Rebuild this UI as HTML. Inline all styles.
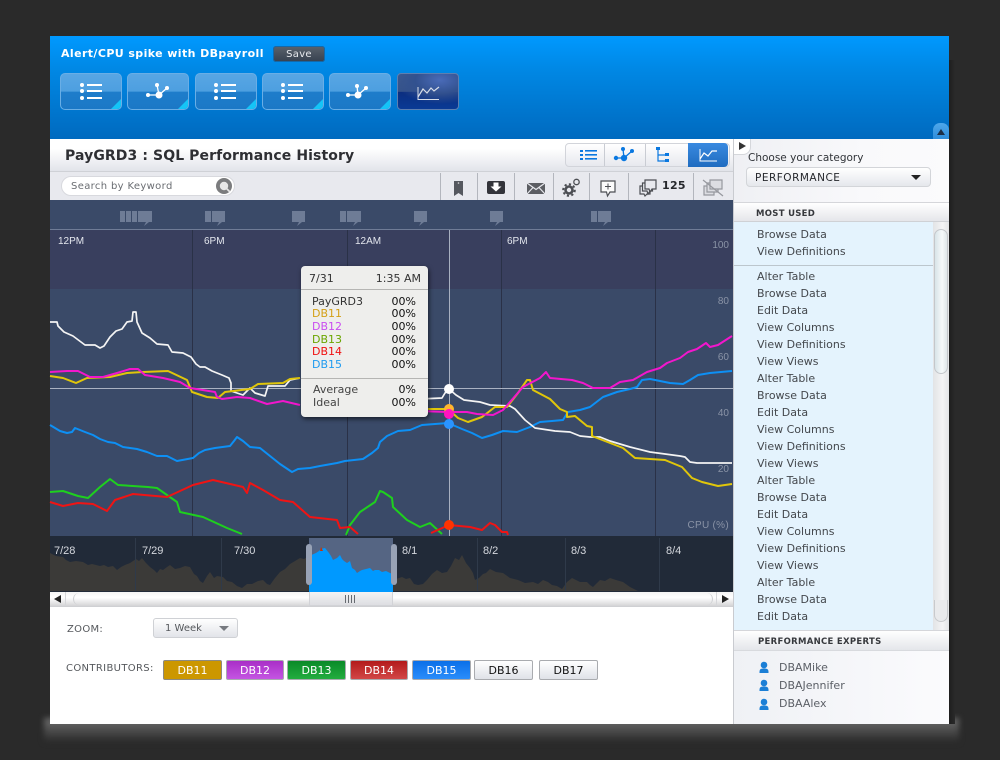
<!DOCTYPE html>
<html><head><meta charset="utf-8"><title>SQL Performance History</title>
<style>
html,body{margin:0;padding:0;width:1000px;height:760px;overflow:hidden;background:#2a2a2a}
body{font-family:"DejaVu Sans","Liberation Sans",sans-serif;position:relative}
.a{position:absolute;white-space:nowrap}
.t{position:absolute;white-space:nowrap;line-height:14px}
.hb{position:absolute;top:73px;width:60px;height:35px;border:1px solid #69aee6;border-radius:5px;background:linear-gradient(#58a6e4 0,#4d9fe0 50%,#1e7dcb 51%,#1b78c6 100%);overflow:hidden}
.hb i{position:absolute;right:0;bottom:0;width:0;height:0;border-left:10px solid transparent;border-bottom:10px solid #14c4f7}
.hb svg{position:absolute;left:0;top:0}
.sep{position:absolute;top:173px;width:1px;height:27px;background:#b3b6bd}
.li{position:absolute;left:757px;font-size:11px;line-height:14px;color:#44484d;white-space:nowrap}
.c{position:absolute;top:660px;height:18px;border-radius:2px;font-size:11px;line-height:19px;text-align:center;color:#fff;border:1px solid #a9abaf}
.row{position:absolute;left:312px;font-size:11px;line-height:13px;white-space:nowrap}
.val{position:absolute;right:584px;font-size:11px;line-height:13px;color:#111;white-space:nowrap}
</style></head><body>

<div class="a" style="left:44px;top:718px;width:915px;height:24px;background:linear-gradient(#6a6a6a 0,#5e5e5e 25%,#2a2a2a 100%);filter:blur(3px)"></div>
<div class="a" style="left:949px;top:60px;width:6px;height:664px;background:linear-gradient(90deg,#1e1e1e,#2a2a2a)"></div>
<div class="a" style="left:50px;top:36px;width:899px;height:688px;background:#fff"></div>

<!-- top header -->
<div class="a" style="left:50px;top:36px;width:899px;height:103px;background:linear-gradient(#0099ff 0,#0089e6 30%,#006abf 100%)"></div>
<div class="t" style="left:61px;top:47px;font-size:11px;font-weight:bold;color:#fff;letter-spacing:.4px">Alert/CPU spike with DBpayroll</div>
<div class="a" style="left:273px;top:46px;width:52px;height:16px;border-radius:3px;background:linear-gradient(#5a626c,#36414f);box-shadow:0 0 0 1px #1568a8 inset;color:#e8eaee;font-size:10px;line-height:17px;text-align:center;letter-spacing:.3px">Save</div>

<div class="hb" style="left:60px"><svg width="60" height="35" fill="#fff"><circle cx="21" cy="11" r="2"/><circle cx="21" cy="17" r="2"/><circle cx="21" cy="24" r="2"/><rect x="26" y="10" width="15" height="2"/><rect x="26" y="16" width="15" height="2"/><rect x="26" y="23" width="15" height="2"/></svg><i></i></div>
<div class="hb" style="left:127px"><svg width="60" height="35" fill="#fff" stroke="#fff"><path d="M20 21H31L29 11M31 21L39 14" fill="none" stroke-width="1.3"/><circle cx="20" cy="21" r="2" stroke="none"/><circle cx="31" cy="21" r="3.5" stroke="none"/><circle cx="29" cy="11" r="2" stroke="none"/><circle cx="39" cy="14" r="2" stroke="none"/></svg><i></i></div>
<div class="hb" style="left:195px"><svg width="60" height="35" fill="#fff"><circle cx="20" cy="11" r="2"/><circle cx="20" cy="17" r="2"/><circle cx="20" cy="24" r="2"/><rect x="25" y="10" width="15" height="2"/><rect x="25" y="16" width="15" height="2"/><rect x="25" y="23" width="15" height="2"/></svg><i></i></div>
<div class="hb" style="left:262px"><svg width="60" height="35" fill="#fff"><circle cx="20" cy="11" r="2"/><circle cx="20" cy="17" r="2"/><circle cx="20" cy="24" r="2"/><rect x="25" y="10" width="15" height="2"/><rect x="25" y="16" width="15" height="2"/><rect x="25" y="23" width="15" height="2"/></svg><i></i></div>
<div class="hb" style="left:329px"><svg width="60" height="35" fill="#fff" stroke="#fff"><path d="M18 21H28L27 12M28 21L36 14" fill="none" stroke-width="1.3"/><circle cx="18" cy="21" r="2" stroke="none"/><circle cx="28" cy="21" r="3.5" stroke="none"/><circle cx="27" cy="12" r="2" stroke="none"/><circle cx="36" cy="14" r="2" stroke="none"/></svg><i></i></div>
<div class="a" style="left:397px;top:73px;width:60px;height:35px;border:1px solid #5e7fb0;border-radius:4px;background:radial-gradient(ellipse 45px 24px at 42px 6px,#4a6bb8 0,#32518f 55%,transparent 100%),linear-gradient(#3d5a8e 0,#35528a 50%,#0b2e80 52%,#0a3a95 100%)"><svg width="60" height="35" fill="none" stroke="#d7dde8" stroke-width="1"><path d="M20 13V25.500H41"/><path d="M20 23L25 15L29 19L33 14L36 17L41 13" stroke-width="1.2"/></svg></div>
<div class="a" style="left:933px;top:123px;width:16px;height:16px;border-radius:7px 7px 0 0;background:linear-gradient(#4ea7ea,#2e8ddb)"></div>
<div class="a" style="left:937px;top:129px;width:0;height:0;border-left:4px solid transparent;border-right:4px solid transparent;border-bottom:6px solid #1d2f46"></div>

<!-- title bar -->
<div class="a" style="left:50px;top:139px;width:683px;height:32px;background:linear-gradient(#fff 0,#fff 30%,#e2e4ea 100%)"></div>
<div class="t" style="left:65px;top:149px;font-size:14px;font-weight:bold;color:#2e2f33;letter-spacing:.1px">PayGRD3 : SQL Performance History</div>
<div class="a" style="left:565px;top:143px;width:163px;height:22px;border:1px solid #d2d4da;border-radius:4px;background:linear-gradient(#fff,#e7e9ee)"></div>
<div class="a" style="left:604px;top:144px;width:1px;height:22px;background:#c9ccd3"></div>
<div class="a" style="left:645px;top:144px;width:1px;height:22px;background:#c9ccd3"></div>
<div class="a" style="left:688px;top:143px;width:40px;height:24px;border-radius:0 4px 4px 0;background:linear-gradient(#3a8ae0,#1f6cc0)"></div>
<svg class="a" style="left:565px;top:143px" width="165" height="24"><g fill="#0a78e0"><rect x="15" y="7" width="3" height="2"/><rect x="15" y="11" width="3" height="2"/><rect x="15" y="15" width="3" height="2"/><rect x="20" y="7" width="12" height="1.6"/><rect x="20" y="11" width="12" height="1.6"/><rect x="20" y="15" width="12" height="1.6"/><circle cx="51" cy="15" r="2.2"/><circle cx="59" cy="15" r="3.2"/><circle cx="58" cy="6" r="2"/><circle cx="67" cy="8" r="2"/></g><path d="M51 15H59L58 6M59 15L67 8" fill="none" stroke="#0a78e0" stroke-width="1.3"/><path d="M93 6V18H101M93 12H101" fill="none" stroke="#0a78e0" stroke-width="1.2"/><g fill="#0a78e0"><rect x="91" y="4" width="4" height="3"/><rect x="100" y="10" width="4" height="3"/><rect x="100" y="16" width="4" height="3"/></g><path d="M135 6V18H152" fill="none" stroke="#fff" stroke-width="1"/><path d="M135 16L139 10L143 13L147 8L152 8" fill="none" stroke="#fff" stroke-width="1.2"/></svg>

<!-- toolbar -->
<div class="a" style="left:50px;top:171px;width:683px;height:29px;background:#e8e9ee;border-top:1px solid #cfd1d6;box-sizing:border-box"></div>
<div class="a" style="left:61px;top:176px;width:172px;height:18px;border:1px solid #d8d9de;border-radius:10px;background:#fff"></div>
<div class="t" style="left:71px;top:180px;font-size:10px;color:#6a6d72;letter-spacing:.35px">Search by Keyword</div>
<svg class="a" style="left:215px;top:177px" width="19" height="19"><circle cx="9" cy="9" r="8" fill="#7b7c7e"/><circle cx="9" cy="9" r="4.2" fill="#e8e8e8"/><path d="M11 11L15 15" stroke="#e8e8e8" stroke-width="1.6"/></svg>
<div class="sep" style="left:440px"></div><div class="sep" style="left:477px"></div><div class="sep" style="left:514px"></div><div class="sep" style="left:553px"></div><div class="sep" style="left:589px"></div><div class="sep" style="left:628px"></div><div class="sep" style="left:693px"></div>
<svg class="a" style="left:440px;top:172px" width="293" height="28">
<path d="M14 9H23V24L18.500 21L14 24Z" fill="#55585f"/><circle cx="18.500" cy="11" r=".8" fill="#ddd"/>
<rect x="47" y="9" width="18" height="13" rx="2" fill="#33343a"/><path d="M53.500 10.500H58.500V14.500H61.500L56 19.500L50.500 14.500H53.500Z" fill="#fff"/>
<rect x="87" y="11" width="18" height="11" fill="#5c5e63"/><path d="M87 11L96 17.500L105 11M87 22L93 15.500M105 22L99 15.500" fill="none" stroke="#e8e9ee" stroke-width="1.2"/>
<g fill="none" stroke="#4c4e53"><circle cx="129" cy="18" r="3.500" stroke-width="2.600"/><circle cx="129" cy="18" r="5.800" stroke-width="2" stroke-dasharray="2.200 2.300"/><circle cx="136.500" cy="10" r="2.700" stroke-width="1.300"/></g>
<path d="M161 9H175V20H170L167.500 24L166.500 20H161Z" fill="#fbfbfb" stroke="#4d4f54" stroke-width="1.200"/><path d="M168 11.500V17.500M165 14.500H171" stroke="#4d4f54" stroke-width="1"/>
<g stroke="#4d4f54" stroke-width="1.200" fill="#e8e9ee"><path d="M200 14H210V22H207L205 24L204 22H200Z"/><path d="M202.500 11H212.500V19H210L208 22L207 19H202.500Z"/><path d="M205 8H216V17H212L210 20L209 17H205Z"/></g>
<g stroke="#96989e" stroke-width="1.200" fill="#dcdde2"><path d="M264 14H274V23H264Z"/><path d="M267 11H278V20H267Z"/><path d="M270 8H282V17H270Z"/><path d="M263 8L283 24" fill="none"/></g>
</svg>
<div class="t" style="left:662px;top:179px;font-size:11px;font-weight:bold;color:#26282c;letter-spacing:.3px">125</div>

<!-- chart -->
<div class="a" style="left:50px;top:200px;width:683px;height:336px;background:#3a4a68"></div>
<div class="a" style="left:50px;top:229px;width:683px;height:60px;background:#393f5e"></div>
<div class="a" style="left:50px;top:229px;width:683px;height:1px;background:#6f7c96"></div>
<svg class="a" style="left:50px;top:200px" width="683" height="337">
<g stroke="#2a3147" stroke-width="1"><path d="M142.500 30V336M297.500 30V336M451.500 30V336M605.500 30V336"/></g>
<path d="M399.500 30V336" stroke="#a8b0c0" stroke-width="1"/><path d="M0 188.500H683" stroke="#aab2c2" stroke-width="1"/>
<g fill="#6e7c96">
<rect x="70" y="11" width="5" height="11"/><rect x="76" y="11" width="5" height="11"/><rect x="82" y="11" width="5" height="11"/><path d="M88 11H102V22H99L94 26L96 22H88Z"/>
<rect x="155" y="11" width="6" height="11"/><path d="M162 11H175V22H172L167 26L169 22H162Z"/>
<path d="M242 11H255V22H252L247 26L249 22H242Z"/>
<rect x="290" y="11" width="6" height="11"/><path d="M297 11H311V22H308L303 26L305 22H297Z"/>
<path d="M364 11H377V22H374L369 26L371 22H364Z"/>
<path d="M440 11H453V22H450L445 26L447 22H440Z"/>
<rect x="541" y="11" width="6" height="11"/><path d="M548 11H561V22H558L553 26L555 22H548Z"/>
</g>
</svg>
<svg class="a" style="left:0;top:0" width="1000" height="537" fill="none" stroke-width="2" stroke-linejoin="round">
<path stroke="#0d90f5" d="M50,425L60,431L67,433L72,432L75,428L85,432L93,435L100,439L108,442L115,443L123,447L130,448L137,449L147,452L157,456L167,456L177,461L193,458L199,453L205,450L215,448L230,446L234,441L237,437L243,441L250,447L260,448L270,456L280,464L292,472L298,469L310,468L320,466L337,463L345,461L363,459L372,453L378,448L380,442L387,436L398,431L410,430L422,425L435,424L448,423L462,429L472,433L482,438L492,435L503,431L517,432L530,427L540,422L552,421L563,420L568,412L580,410L590,407L603,397L617,392L630,389L637,387L642,380L650,379L660,381L670,383L683,384L690,380L698,375L710,373L732,371"/>
<path stroke="#f4f4f4" stroke-width="1.700" d="M50,322L57,322L58,326L64,332L73,336L85,345L95,345L100,348L104,346L110,337L116,331L122,329L127,322L132,321L133,312L136,312L137,322L142,333L150,338L157,344L168,345L172,352L183,353L191,357L196,364L200,367L205,367L212,371L222,375L229,378L231,383L231,391L237,393L243,395L250,388L255,393L265,396L268,386L285,386L290,380L300,378M390,398L420,399L442,398L445,393L449,389L456,395L464,400L480,402L490,405L510,406L515,409L525,420L535,428L555,431L570,432L580,436L590,437L600,437L610,441L630,447L650,452L680,456L685,457L690,462L697,463L732,463"/>
<path stroke="#e0c60a" d="M50,376L63,378L76,383L87,378L110,377L127,373L143,372L168,371L187,380L192,392L207,397L218,398L225,392L250,389L258,384L283,383L290,379L300,378M390,409L448,409L458,418L468,422L482,417L495,407L507,407L518,393L527,380L530,380L533,390L550,399L560,409L567,412L567,417L575,416L587,426L592,427L592,436L623,448L635,458L665,460L682,467L692,478L702,482L718,486L732,484"/>
<path stroke="#f216cc" d="M50,372L67,371L78,371L90,377L103,377L117,373L130,369L138,369L145,375L163,378L180,382L190,388L215,392L217,397L222,399L237,397L250,398L267,404L283,401L300,405M390,410L448,412L467,412L477,414L493,415L503,410L523,387L540,378L546,372L550,378L572,380L583,383L593,388L610,388L620,382L633,380L647,372L660,368L667,363L680,358L688,352L697,349L706,343L710,347L718,345L732,336"/>
<path stroke="#1ed01e" d="M50,492L63,491L78,496L88,498L100,487L110,479L118,485L148,487L157,488L177,502L180,512L203,517L227,528L242,534M346,535L350,525L360,512L375,502L380,491L383,492L392,498L393,507L407,520L420,527L430,523L442,534"/>
<path stroke="#f01414" d="M50,502L63,506L78,503L93,504L107,511L115,500L133,494L167,497L193,485L213,480L243,487L247,493L250,483L263,490L280,500L293,502L310,517L337,520L340,528L350,527L358,534M431,533L449,525L470,527L482,530L490,523L495,525L502,532L507,532L508,535"/>
<circle cx="449" cy="389" r="5" fill="#fff" stroke="none"/><circle cx="449" cy="409" r="5" fill="#ffb52e" stroke="none"/><circle cx="449" cy="414" r="5" fill="#ff14c0" stroke="none"/><circle cx="449" cy="424" r="5" fill="#2a94ff" stroke="none"/><circle cx="449" cy="525" r="5" fill="#ff3300" stroke="none"/>
</svg>
<div class="t" style="left:58px;top:235px;font-family:'Liberation Sans',sans-serif;font-size:10px;color:#e4e7ee">12PM</div>
<div class="t" style="left:204px;top:235px;font-family:'Liberation Sans',sans-serif;font-size:10px;color:#e4e7ee">6PM</div>
<div class="t" style="left:355px;top:235px;font-family:'Liberation Sans',sans-serif;font-size:10px;color:#e4e7ee">12AM</div>
<div class="t" style="left:507px;top:235px;font-family:'Liberation Sans',sans-serif;font-size:10px;color:#e4e7ee">6PM</div>
<div class="t" style="right:271px;top:239px;font-family:'Liberation Sans',sans-serif;font-size:10px;color:#8a93a6">100</div>
<div class="t" style="right:271px;top:295px;font-family:'Liberation Sans',sans-serif;font-size:10px;color:#8a93a6">80</div>
<div class="t" style="right:271px;top:351px;font-family:'Liberation Sans',sans-serif;font-size:10px;color:#8a93a6">60</div>
<div class="t" style="right:271px;top:407px;font-family:'Liberation Sans',sans-serif;font-size:10px;color:#8a93a6">40</div>
<div class="t" style="right:271px;top:463px;font-family:'Liberation Sans',sans-serif;font-size:10px;color:#8a93a6">20</div>
<div class="t" style="right:271px;top:519px;font-family:'Liberation Sans',sans-serif;font-size:10px;color:#8a93a6;letter-spacing:.3px">CPU (%)</div>

<!-- tooltip -->
<div class="a" style="left:301px;top:266px;width:127px;height:151px;background:#eeeeec;border-radius:4px;box-shadow:1px 2px 5px rgba(0,0,0,.6)"></div>
<div class="a" style="left:301px;top:289px;width:127px;height:1px;background:#b5b5b3"></div>
<div class="a" style="left:301px;top:378px;width:127px;height:1px;background:#b5b5b3"></div>
<div class="row" style="left:309px;top:272px;color:#333">7/31</div>
<div class="a" style="right:579px;top:272px;font-size:11px;line-height:13px;color:#333">1:35 AM</div>
<div class="row" style="top:295px;color:#333">PayGRD3</div><div class="val" style="top:295px">00%</div>
<div class="row" style="top:307px;color:#d4a017">DB11</div><div class="val" style="top:307px">00%</div>
<div class="row" style="top:320px;color:#c94df0">DB12</div><div class="val" style="top:320px">00%</div>
<div class="row" style="top:333px;color:#6aa500">DB13</div><div class="val" style="top:333px">00%</div>
<div class="row" style="top:345px;color:#f01010">DB14</div><div class="val" style="top:345px">00%</div>
<div class="row" style="top:358px;color:#1f9bf0">DB15</div><div class="val" style="top:358px">00%</div>
<div class="row" style="left:313px;top:383px;color:#444">Average</div><div class="val" style="top:383px">0%</div>
<div class="row" style="left:313px;top:396px;color:#444">Ideal</div><div class="val" style="top:396px">00%</div>

<!-- minimap -->
<div class="a" style="left:50px;top:536px;width:683px;height:56px;background:#212a38"></div>
<svg class="a" style="left:0;top:536px" width="733" height="57">
<g transform="translate(0,-536)">
<path fill="#3b3a38" d="M50,553L56,556L63,557L66,560L70,562L76,561L83,562L88,565L92,564L100,566L104,565L108,567L113,566L117,570L121,567L125,565L130,563L136,559L139,561L142,558L146,563L150,567L154,570L157,573L160,569L163,570L167,567L170,565L175,569L180,568L185,566L190,567L194,574L197,576L200,581L203,583L207,576L210,572L214,578L217,576L223,577L227,581L232,582L237,586L242,588L247,584L252,584L258,581L263,580L267,584L270,585L275,578L280,572L285,569L290,564L295,561L300,558L304,559L309,556V591H50Z"/>
<path fill="#3b3a38" d="M393,580L402,577L406,579L410,578L414,584L418,585L423,584L427,580L432,574L437,570L442,573L447,572L451,566L455,558L459,560L462,555L466,563L470,568L473,573L475,580L479,578L483,574L486,573L490,569L496,572L503,573L510,578L518,580L525,583L533,582L538,584L543,580L548,582L552,585L557,586L562,589L567,582L572,578L580,582L587,582L590,585L593,587L597,583L600,580L605,581L610,578L616,580L623,582L630,587L638,591H393Z"/>
<path stroke="#2f3a4a" d="M135.500 538V591M221.500 538V591M477.500 538V591M565.500 538V591M659.500 538V591" fill="none"/>
<rect x="309" y="538" width="84" height="54" fill="#556583"/>
<path fill="#0099ff" d="M309,592V556L316,553L319,551L321,549L325,548L329,553L331,556L333,560L337,558L340,555L342,559L344,561L347,563L350,561L352,568L355,570L357,573L360,571L362,570L366,569L370,568L373,571L375,570L379,570L382,572L386,571L390,573L393,574V592Z"/>
<path fill="#cc3300" d="M320,551L321,547L323,551Z"/>
<rect x="306" y="544" width="6" height="41" rx="3" fill="#98a2b5"/><rect x="391" y="544" width="6" height="41" rx="3" fill="#98a2b5"/>
</g></svg>
<div class="t" style="left:54px;top:544px;font-family:'Liberation Sans',sans-serif;font-size:11px;color:#d5d8de">7/28</div>
<div class="t" style="left:142px;top:544px;font-family:'Liberation Sans',sans-serif;font-size:11px;color:#d5d8de">7/29</div>
<div class="t" style="left:234px;top:544px;font-family:'Liberation Sans',sans-serif;font-size:11px;color:#d5d8de">7/30</div>
<div class="t" style="left:402px;top:544px;font-family:'Liberation Sans',sans-serif;font-size:11px;color:#d5d8de">8/1</div>
<div class="t" style="left:483px;top:544px;font-family:'Liberation Sans',sans-serif;font-size:11px;color:#d5d8de">8/2</div>
<div class="t" style="left:571px;top:544px;font-family:'Liberation Sans',sans-serif;font-size:11px;color:#d5d8de">8/3</div>
<div class="t" style="left:666px;top:544px;font-family:'Liberation Sans',sans-serif;font-size:11px;color:#d5d8de">8/4</div>

<!-- scrollbar -->
<div class="a" style="left:50px;top:592px;width:683px;height:15px;background:linear-gradient(#f4f4f4,#fff 40%,#d4d4d6);border-bottom:1px solid #cfd0d3;box-sizing:border-box"></div>
<div class="a" style="left:65px;top:592px;width:1px;height:14px;background:#d5d6d9"></div>
<div class="a" style="left:716px;top:592px;width:1px;height:14px;background:#d5d6d9"></div>
<div class="a" style="left:54px;top:595px;width:0;height:0;border-top:4px solid transparent;border-bottom:4px solid transparent;border-right:7px solid #222"></div>
<div class="a" style="left:722px;top:595px;width:0;height:0;border-top:4px solid transparent;border-bottom:4px solid transparent;border-left:7px solid #222"></div>
<div class="a" style="left:73px;top:593px;width:638px;height:12px;border:1px solid #cfd0d3;border-width:0 1px;border-radius:7px;background:transparent"></div>
<div class="a" style="left:309px;top:592px;width:84px;height:14px;background:linear-gradient(#f3f3f4,#dddee2);border:1px solid #d2d3d7;border-top:0;box-sizing:border-box"></div>
<svg class="a" style="left:344px;top:595px" width="14" height="8"><path d="M1.500 0V8M4.500 0V8M7.500 0V8M10.500 0V8" stroke="#666a70"/></svg>

<!-- bottom controls -->
<div class="t" style="left:67px;top:623px;font-size:10px;color:#55585c;letter-spacing:.3px">ZOOM:</div>
<div class="a" style="left:153px;top:618px;width:83px;height:18px;border:1px solid #cfd1d5;border-radius:3px;background:linear-gradient(#fff,#e2e4e9);font-size:10px;line-height:19px;color:#55585c;text-indent:11px">1 Week</div>
<div class="a" style="left:219px;top:626px;width:0;height:0;border-left:5px solid transparent;border-right:5px solid transparent;border-top:5px solid #777a80"></div>
<div class="t" style="left:66px;top:662px;font-size:10px;color:#55585c;letter-spacing:.35px">CONTRIBUTORS:</div>
<div class="c" style="left:163px;width:57px;background:#cc9700;border-color:#8d8a80">DB11</div>
<div class="c" style="left:226px;width:56px;background:linear-gradient(#a92fc7,#c455e2)">DB12</div>
<div class="c" style="left:287px;width:57px;background:linear-gradient(#0a8a28,#23ad3f)">DB13</div>
<div class="c" style="left:350px;width:56px;background:linear-gradient(#b31b1b,#d24747)">DB14</div>
<div class="c" style="left:412px;width:57px;background:linear-gradient(#0a6fe8,#2a8dfa)">DB15</div>
<div class="c" style="left:474px;width:57px;background:linear-gradient(#fff,#dfe2e8);color:#111">DB16</div>
<div class="c" style="left:539px;width:57px;background:linear-gradient(#fff,#dfe2e8);color:#111">DB17</div>

<!-- right panel -->
<div class="a" style="left:733px;top:139px;width:216px;height:585px;background:#fff;border-left:1px solid #c9cbd0;box-sizing:border-box"></div>
<div class="a" style="left:734px;top:139px;width:215px;height:64px;background:linear-gradient(90deg,#eff0f4,#f9f9fb 60%,#fbfbfc)"></div>
<div class="a" style="left:734px;top:139px;width:16px;height:15px;background:#fff;border:1px solid #d5d7db;border-width:0 1px 1px 0;border-radius:0 0 8px 0"></div>
<div class="a" style="left:739px;top:142px;width:0;height:0;border-top:4px solid transparent;border-bottom:4px solid transparent;border-left:7px solid #333"></div>
<div class="t" style="left:748px;top:151px;font-size:10.500px;color:#303338">Choose your category</div>
<div class="a" style="left:746px;top:167px;width:183px;height:18px;border:1px solid #d3d5d9;border-radius:4px;background:linear-gradient(#fff,#e5e7ec);font-size:10.500px;line-height:20px;color:#25272b;text-indent:8px;letter-spacing:.5px">PERFORMANCE</div>
<div class="a" style="left:911px;top:175px;width:0;height:0;border-left:5px solid transparent;border-right:5px solid transparent;border-top:5px solid #222"></div>
<div class="a" style="left:734px;top:202px;width:215px;height:20px;background:linear-gradient(#fff,#e5e6ea);border-top:1px solid #d5d6da;border-bottom:1px solid #cfd1d5;box-sizing:border-box"></div>
<div class="t" style="left:756px;top:207px;font-size:8.500px;font-weight:bold;color:#36383c;letter-spacing:.3px">MOST USED</div>
<div class="a" style="left:734px;top:222px;width:199px;height:408px;background:#e4f3fd"></div>
<div class="a" style="left:734px;top:265px;width:199px;height:1px;background:#bcc6cd"></div>
<div class="a" style="left:933px;top:222px;width:16px;height:408px;background:linear-gradient(90deg,#e2e3e5,#f4f4f5 60%,#e3e4e6)"></div>
<div class="a" style="left:934px;top:229px;width:12px;height:143px;border:1px solid #c4c7cb;border-radius:7px;background:linear-gradient(90deg,#d8e4e8,#f6f9fa 60%,#dfe6e8)"></div>
<div class="a" style="left:934px;top:600px;width:12px;height:21px;border:1px solid #c8cacd;border-top:0;border-radius:0 0 7px 7px;background:#e9eaec"></div>
<div class="li" style="top:228px">Browse Data</div>
<div class="li" style="top:245px">View Definitions</div>
<div class="li" style="top:270px">Alter Table</div>
<div class="li" style="top:287px">Browse Data</div>
<div class="li" style="top:304px">Edit Data</div>
<div class="li" style="top:321px">View Columns</div>
<div class="li" style="top:338px">View Definitions</div>
<div class="li" style="top:355px">View Views</div>
<div class="li" style="top:372px">Alter Table</div>
<div class="li" style="top:389px">Browse Data</div>
<div class="li" style="top:406px">Edit Data</div>
<div class="li" style="top:423px">View Columns</div>
<div class="li" style="top:440px">View Definitions</div>
<div class="li" style="top:457px">View Views</div>
<div class="li" style="top:474px">Alter Table</div>
<div class="li" style="top:491px">Browse Data</div>
<div class="li" style="top:508px">Edit Data</div>
<div class="li" style="top:525px">View Columns</div>
<div class="li" style="top:542px">View Definitions</div>
<div class="li" style="top:559px">View Views</div>
<div class="li" style="top:576px">Alter Table</div>
<div class="li" style="top:593px">Browse Data</div>
<div class="li" style="top:610px">Edit Data</div>
<div class="a" style="left:734px;top:630px;width:215px;height:21px;background:linear-gradient(#fff,#e4e6ea);border-top:1px solid #d5d6da;border-bottom:1px solid #d8dade;box-sizing:border-box"></div>
<div class="t" style="left:758px;top:635px;font-size:8.500px;font-weight:bold;color:#36383c;letter-spacing:.3px">PERFORMANCE EXPERTS</div>
<div class="a" style="left:734px;top:651px;width:215px;height:73px;background:linear-gradient(90deg,#eff1f5,#fbfbfd)"></div>
<svg class="a" style="left:758px;top:661px" width="12" height="50" fill="#1b7fd6"><g><circle cx="6" cy="4" r="3.300"/><path d="M1.500 11C1.500 8 3 7.500 6 7.500S10.500 8 10.500 11V12H1.500Z"/></g><g transform="translate(0,18)"><circle cx="6" cy="4" r="3.300"/><path d="M1.500 11C1.500 8 3 7.500 6 7.500S10.500 8 10.500 11V12H1.500Z"/></g><g transform="translate(0,37)"><circle cx="6" cy="4" r="3.300"/><path d="M1.500 11C1.500 8 3 7.500 6 7.500S10.500 8 10.500 11V12H1.500Z"/></g></svg>
<div class="li" style="left:779px;top:661px;color:#5b5f66">DBAMike</div>
<div class="li" style="left:779px;top:679px;color:#5b5f66">DBAJennifer</div>
<div class="li" style="left:779px;top:697px;color:#5b5f66">DBAAlex</div>

</body></html>
